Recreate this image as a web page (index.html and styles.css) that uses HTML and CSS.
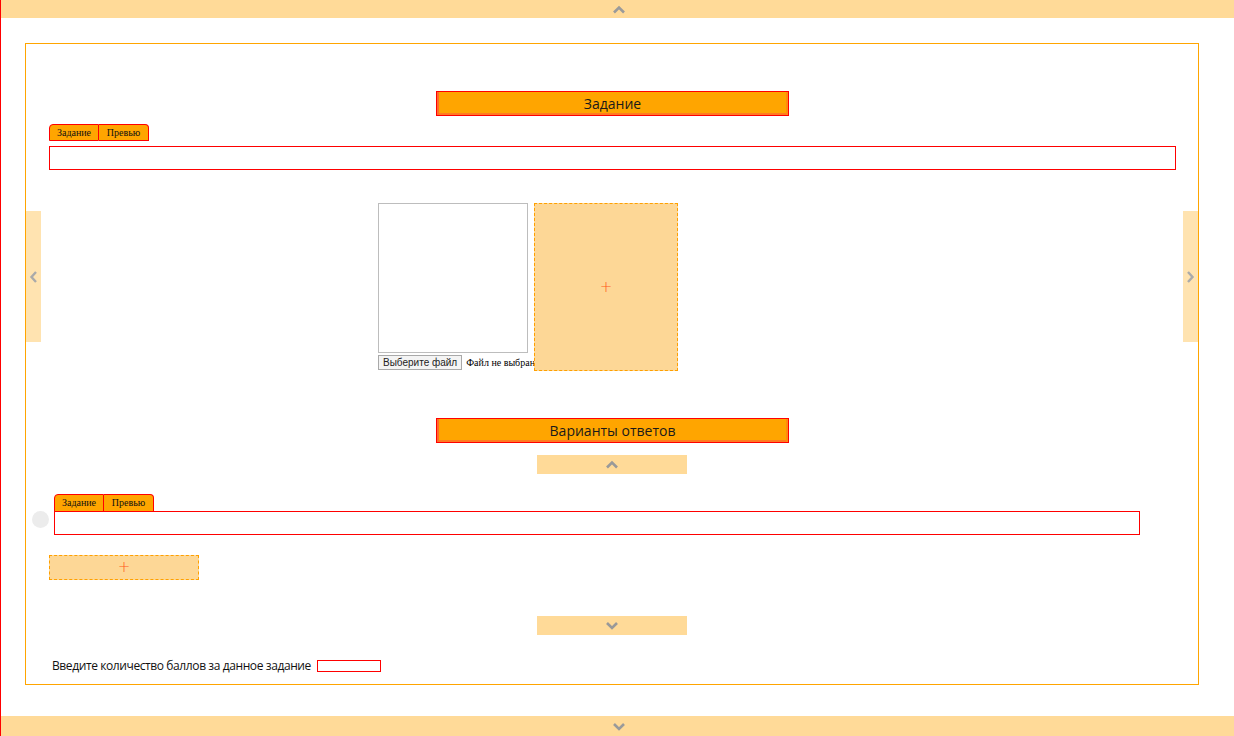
FILE: index.html
```html
<!DOCTYPE html>
<html lang="ru">
<head>
<meta charset="utf-8">
<title>Задание</title>
<link rel="stylesheet" href="styles.css">
</head>
<body>
<div class="navbar">
  <svg class="chev" width="14" height="9" viewBox="0 0 14 9"><path d="M2 7.5 L7 2.5 L12 7.5" fill="none" stroke="#9a9a9a" stroke-width="2.6"/></svg>
</div>

<div class="main">
  <div class="side side-left">
    <svg width="9" height="14" viewBox="0 0 9 14"><path d="M7 2 L2.5 7 L7 12" fill="none" stroke="#aaa" stroke-width="2.4"/></svg>
  </div>
  <div class="side side-right">
    <svg width="9" height="14" viewBox="0 0 9 14"><path d="M2 2 L6.5 7 L2 12" fill="none" stroke="#aaa" stroke-width="2.4"/></svg>
  </div>

  <div class="heading h-task">Задание</div>

  <div class="editor editor-task">
    <div class="tabs">
      <span class="tab">Задание</span><span class="tab">Превью</span>
    </div>
    <div class="textbox"></div>
  </div>

  <div class="media">
    <div class="upload">
      <div class="preview"></div>
      <div class="file">
        <span class="filebtn">Выберите файл</span><span class="filetext">Файл не выбран</span>
      </div>
    </div>
    <div class="dropzone"><span class="plus">+</span></div>
  </div>

  <div class="heading h-answers">Варианты ответов</div>

  <div class="movebar move-up">
    <svg width="14" height="9" viewBox="0 0 14 9"><path d="M2 7.5 L7 2.5 L12 7.5" fill="none" stroke="#999" stroke-width="2.6"/></svg>
  </div>

  <div class="answer">
    <span class="radio"></span>
    <div class="editor editor-answer">
      <div class="tabs">
        <span class="tab">Задание</span><span class="tab">Превью</span>
      </div>
      <div class="textbox"></div>
    </div>
  </div>

  <div class="addbtn"><span class="plus">+</span></div>

  <div class="movebar move-down">
    <svg width="14" height="9" viewBox="0 0 14 9"><path d="M2 2 L7 7 L12 2" fill="none" stroke="#999" stroke-width="2.6"/></svg>
  </div>

  <div class="score">
    <span class="score-label">Введите количество баллов за данное задание</span>
    <span class="score-input"></span>
  </div>
</div>

<div class="navbar navbar-bottom">
  <svg class="chev" width="14" height="9" viewBox="0 0 14 9"><path d="M2 2 L7 7 L12 2" fill="none" stroke="#9a9a9a" stroke-width="2.6"/></svg>
</div>
</body>
</html>
```

FILE: styles.css
```css
* { box-sizing: border-box; }

html, body {
  margin: 0;
  padding: 0;
}

body {
  width: 1234px;
  height: 736px;
  overflow: hidden;
  border-left: 1px solid #ff0000;
  background: #fff;
  font-family: "Open Sans", "DejaVu Sans", sans-serif;
  color: #111;
}

.navbar {
  height: 18px;
  background: #ffda98;
  display: flex;
  justify-content: center;
  align-items: center;
  padding-left: 2px;
}

.navbar-bottom {
  height: 20px;
  margin-top: 31px;
}

.main {
  position: relative;
  margin: 25px 0 0 24px;
  width: 1174px;
  height: 642px;
  border: 1px solid #ffa500;
  padding: 47px 22px 0 23px;
}

.side {
  position: absolute;
  top: 167px;
  width: 15px;
  height: 131px;
  background: #ffe3b0;
  display: flex;
  align-items: center;
  justify-content: center;
}
.side-left { left: 0; }
.side-right { right: 0; }

.heading {
  width: 353px;
  height: 25px;
  background: #ffa500;
  border: 1px solid #ff0000;
  box-shadow: inset 2px 0 0 #ff6a2a, inset -2px 0 0 #ff8a10, inset 0 -2px 0 #ff7a20;
  text-align: center;
  font-size: 14px;
  line-height: 23px;
  color: #1a1a1a;
}

.h-task { margin-left: 387px; }

.editor { position: relative; }

.tabs {
  display: flex;
  height: 17px;
}

.tab {
  width: 50px;
  height: 17px;
  background: #ffa500;
  border: 1px solid #ff0000;
  font-family: "Liberation Serif", "DejaVu Serif", serif;
  font-size: 10px;
  line-height: 15px;
  text-align: center;
  color: #111;
}
.tab:first-child { border-top-left-radius: 4px; }
.tab:last-child { border-left: none; border-top-right-radius: 4px; }

.textbox {
  height: 24px;
  border: 1px solid #ff0000;
  background: #fff;
}

.editor-task { margin-top: 8px; }
.editor-task .textbox { margin-top: 5px; }

.media {
  display: flex;
  gap: 6px;
  margin: 33px 0 0 329px;
}

.upload {
  width: 150px;
  position: relative;
}

.preview {
  width: 150px;
  height: 150px;
  border: 1px solid #bdbdbd;
  background: #fff;
}

.file {
  display: flex;
  align-items: center;
  gap: 4px;
  margin-top: 2px;
  white-space: nowrap;
}

.filebtn {
  display: inline-block;
  height: 15px;
  padding: 0 4px;
  border: 1px solid #a9a9a9;
  background: #f4f4f4;
  font-family: "Liberation Sans", Arial, sans-serif;
  font-size: 10px;
  line-height: 13px;
  color: #222;
}

.filetext {
  font-family: "Liberation Serif", serif;
  font-size: 10px;
  color: #000;
}

.dropzone {
  position: relative;
  z-index: 1;
  width: 144px;
  height: 168px;
  background: #fdd796;
  border: 1px dashed #ffa000;
  display: flex;
  align-items: center;
  justify-content: center;
}

.plus {
  color: #ff5a1a;
  font-family: "DejaVu Sans", sans-serif;
  font-size: 15px;
  font-weight: 300;
  line-height: 1;
}

.h-answers { margin-top: 47px; margin-left: 387px; }

.movebar {
  width: 150px;
  height: 19px;
  background: #ffda98;
  margin-left: 488px;
  display: flex;
  align-items: center;
  justify-content: center;
}

.move-up { margin-top: 12px; }

.answer {
  position: relative;
  margin-top: 20px;
  margin-right: 36px;
  padding-left: 5px;
}

.answer .radio {
  position: absolute;
  left: -17px;
  top: 17px;
  width: 17px;
  height: 17px;
  border-radius: 50%;
  background: #ececec;
}

.answer .tab { height: 18px; }
.answer .tabs { height: 17px; }

.addbtn {
  width: 150px;
  height: 25px;
  margin-top: 20px;
  background: #fdd796;
  border: 1px dashed #ffa000;
  display: flex;
  align-items: center;
  justify-content: center;
}

.move-down { margin-top: 36px; }

.score {
  display: flex;
  align-items: center;
  gap: 6px;
  margin-top: 23px;
  padding-left: 3px;
}

.score-label {
  font-size: 12px;
  line-height: 16px;
  letter-spacing: -0.4px;
  color: #111;
}

.score-input {
  width: 64px;
  height: 12px;
  border: 1px solid #ff0000;
}
```
